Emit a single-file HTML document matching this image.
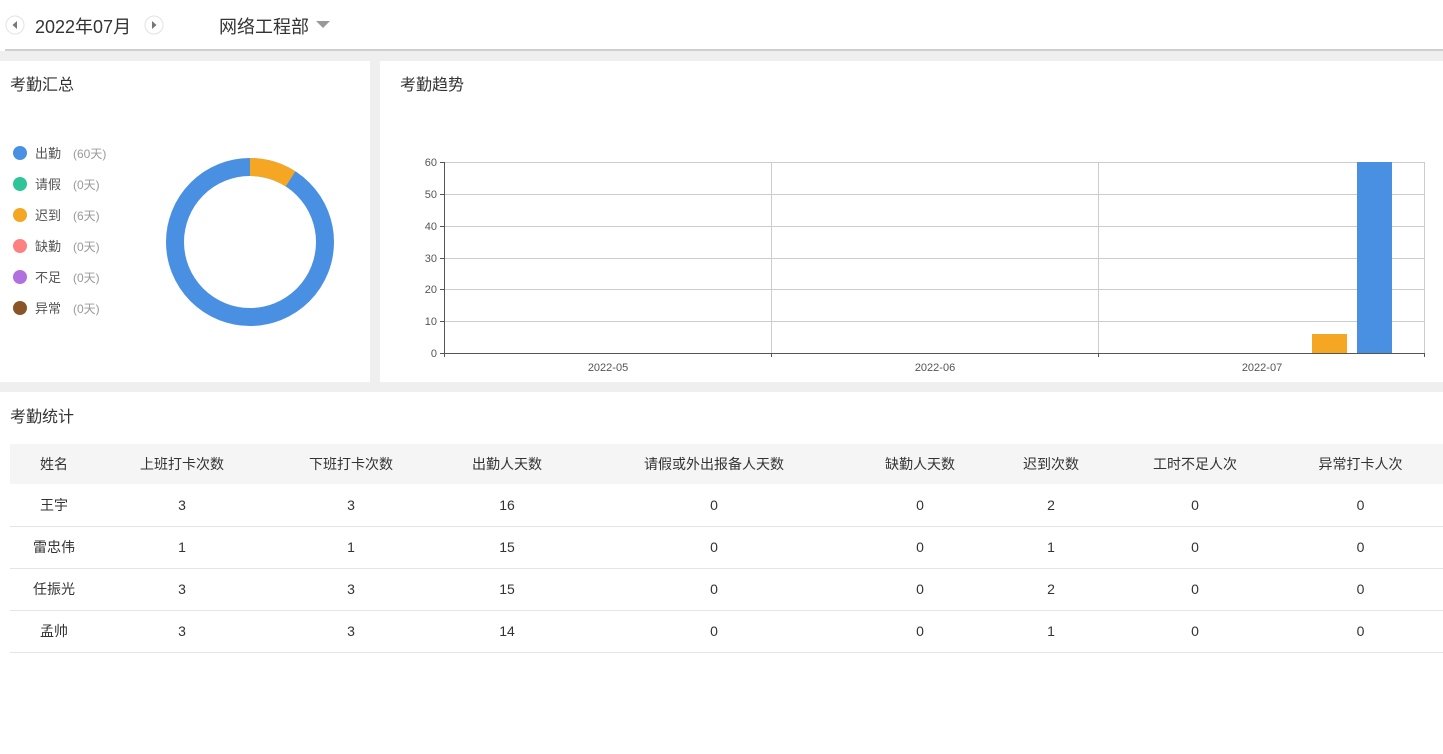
<!DOCTYPE html>
<html><head><meta charset="utf-8"><style>
*{margin:0;padding:0;box-sizing:border-box}
body{width:1443px;height:754px;background:#efefef;font-family:"Liberation Sans","Noto Sans CJK SC",sans-serif;color:#333;position:relative;overflow:hidden}
.a{position:absolute}
.top{left:0;top:0;width:1443px;height:51px;background:#fff}
.line{left:5px;top:49px;width:1438px;height:2px;background:#d0d0d0}
.p{background:#fff}
.t{font-size:16px;color:#333}
.lg{font-size:13px;color:#555;height:20px;line-height:20px}
.lg i{display:inline-block;width:14px;height:14px;border-radius:50%;vertical-align:-2px;margin-right:8px}
.lg span{color:#999;font-size:12px;margin-left:12px}
table{border-collapse:collapse;font-size:14px;color:#333}
td,th{text-align:center;font-weight:normal;padding:0}
th{height:40px;background:#f5f5f5}
td{height:42px;border-bottom:1px solid #e5e5e5}
</style></head><body>
<div class="a top"></div>
<div class="a line"></div>
<svg class="a" style="left:5px;top:14px" width="20" height="22"><circle cx="10" cy="11" r="9" fill="#fff" stroke="#e2e2e2"/><path d="M12 7 L7.5 11 L12 15Z" fill="#777"/></svg>
<div class="a" style="left:35px;top:13px;font-size:18px;color:#333">2022年07月</div>
<svg class="a" style="left:144px;top:14px" width="20" height="22"><circle cx="10" cy="11" r="9" fill="#fff" stroke="#e2e2e2"/><path d="M8 7 L12.5 11 L8 15Z" fill="#777"/></svg>
<div class="a" style="left:219px;top:13px;font-size:18px;color:#333">网络工程部</div>
<svg class="a" style="left:315px;top:20px" width="16" height="10"><path d="M1 1 L15 1 L8 8Z" fill="#999"/></svg>

<div class="a p" style="left:0;top:61px;width:370px;height:321px"></div>
<div class="a t" style="left:10px;top:71px">考勤汇总</div>
<div class="a lg" style="left:13px;top:144px"><i style="background:#4a90e2"></i>出勤<span>(60天)</span></div>
<div class="a lg" style="left:13px;top:175px"><i style="background:#2ec598"></i>请假<span>(0天)</span></div>
<div class="a lg" style="left:13px;top:206px"><i style="background:#f5a623"></i>迟到<span>(6天)</span></div>
<div class="a lg" style="left:13px;top:237px"><i style="background:#ff8080"></i>缺勤<span>(0天)</span></div>
<div class="a lg" style="left:13px;top:268px"><i style="background:#b070e0"></i>不足<span>(0天)</span></div>
<div class="a lg" style="left:13px;top:299px"><i style="background:#8b5427"></i>异常<span>(0天)</span></div>
<svg class="a" style="left:160px;top:152px" width="180" height="180">
<circle cx="90" cy="90" r="75" fill="none" stroke="#4a90e2" stroke-width="18"/>
<circle cx="90" cy="90" r="75" fill="none" stroke="#f5a623" stroke-width="18" stroke-dasharray="42.8 500" transform="rotate(-90 90 90)"/>
</svg>

<div class="a p" style="left:380px;top:61px;width:1063px;height:321px"></div>
<div class="a t" style="left:400px;top:71px">考勤趋势</div>
<svg class="a" style="left:380px;top:61px" width="1063" height="321" font-size="11" fill="#555" font-family="Liberation Sans,sans-serif">
<g stroke="#ccc" stroke-width="1">
<line x1="64" y1="101.5" x2="1045" y2="101.5"/><line x1="64" y1="133.5" x2="1045" y2="133.5"/><line x1="64" y1="165.5" x2="1045" y2="165.5"/><line x1="64" y1="197.5" x2="1045" y2="197.5"/><line x1="64" y1="228.5" x2="1045" y2="228.5"/><line x1="64" y1="260.5" x2="1045" y2="260.5"/>
<line x1="391.5" y1="101" x2="391.5" y2="292"/><line x1="718.5" y1="101" x2="718.5" y2="292"/><line x1="1044.5" y1="101" x2="1044.5" y2="292"/>
</g>
<g stroke="#555"><line x1="64.5" y1="101" x2="64.5" y2="296"/><line x1="64" y1="292.5" x2="1045" y2="292.5"/>
<line x1="60" y1="101.5" x2="64" y2="101.5"/><line x1="60" y1="133.5" x2="64" y2="133.5"/><line x1="60" y1="165.5" x2="64" y2="165.5"/><line x1="60" y1="197.5" x2="64" y2="197.5"/><line x1="60" y1="228.5" x2="64" y2="228.5"/><line x1="60" y1="260.5" x2="64" y2="260.5"/><line x1="60" y1="292.5" x2="64" y2="292.5"/>
<line x1="391.5" y1="292" x2="391.5" y2="296"/><line x1="718.5" y1="292" x2="718.5" y2="296"/><line x1="1044.5" y1="292" x2="1044.5" y2="296"/></g>
<g text-anchor="end"><text x="57" y="105">60</text><text x="57" y="137">50</text><text x="57" y="169">40</text><text x="57" y="201">30</text><text x="57" y="232">20</text><text x="57" y="264">10</text><text x="57" y="296">0</text></g>
<g text-anchor="middle"><text x="228" y="310">2022-05</text><text x="555" y="310">2022-06</text><text x="882" y="310">2022-07</text></g>
<rect x="932" y="273" width="35" height="19" fill="#f5a623"/>
<rect x="977" y="101" width="35" height="191" fill="#4a90e2"/>
</svg>

<div class="a p" style="left:0;top:392px;width:1443px;height:362px"></div>
<div class="a t" style="left:10px;top:403px">考勤统计</div>
<table class="a" style="left:10px;top:444px;width:1433px">
<colgroup><col style="width:88px"><col style="width:168px"><col style="width:170px"><col style="width:142px"><col style="width:272px"><col style="width:140px"><col style="width:122px"><col style="width:166px"><col style="width:165px"></colgroup>
<tr><th>姓名</th><th>上班打卡次数</th><th>下班打卡次数</th><th>出勤人天数</th><th>请假或外出报备人天数</th><th>缺勤人天数</th><th>迟到次数</th><th>工时不足人次</th><th>异常打卡人次</th></tr>
<tr><td>王宇</td><td>3</td><td>3</td><td>16</td><td>0</td><td>0</td><td>2</td><td>0</td><td>0</td></tr>
<tr><td>雷忠伟</td><td>1</td><td>1</td><td>15</td><td>0</td><td>0</td><td>1</td><td>0</td><td>0</td></tr>
<tr><td>任振光</td><td>3</td><td>3</td><td>15</td><td>0</td><td>0</td><td>2</td><td>0</td><td>0</td></tr>
<tr><td>孟帅</td><td>3</td><td>3</td><td>14</td><td>0</td><td>0</td><td>1</td><td>0</td><td>0</td></tr>
</table>
</body></html>
